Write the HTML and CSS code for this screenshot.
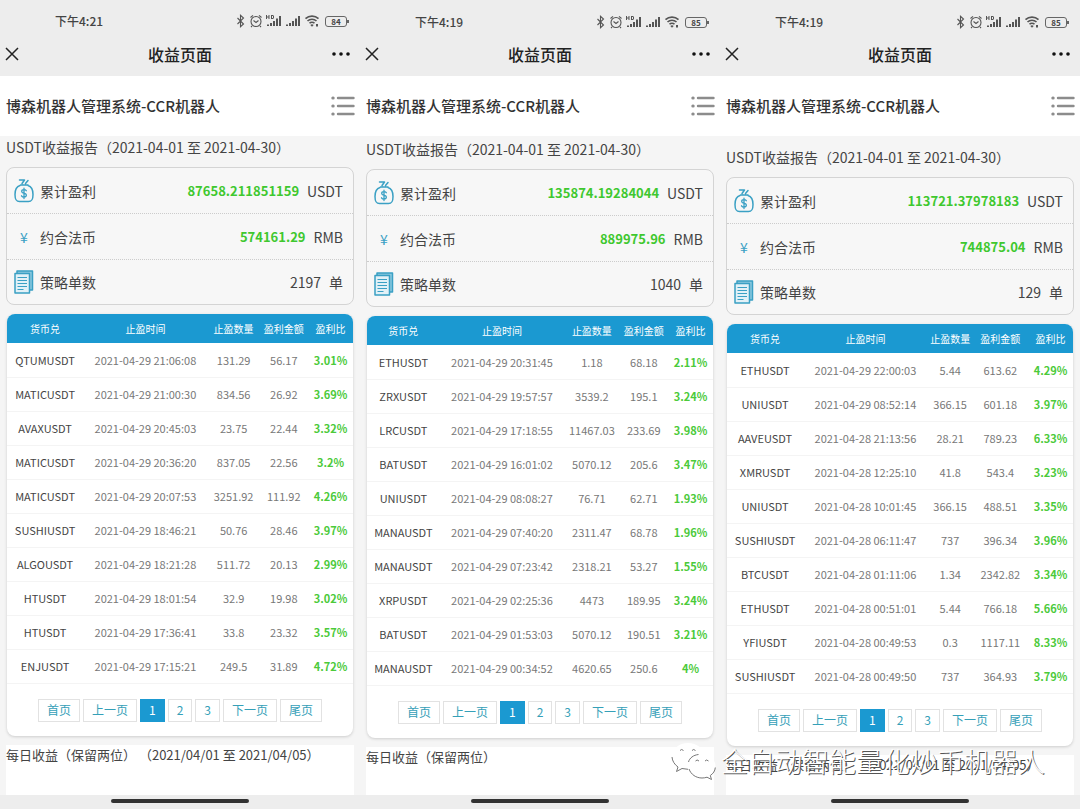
FILE: index.html
```html
<!DOCTYPE html>
<html lang="zh-CN">
<head>
<meta charset="utf-8">
<title>收益页面</title>
<link rel="stylesheet" href="styles.css">
</head>
<body>
<svg class="defs" aria-hidden="true">
  <symbol id="status" viewBox="0 0 84 14">
    <g fill="none" stroke="#555" stroke-width="1.1">
      <path d="M1.5 4l6 6-3 2.700V1.300l3 2.700-6 6"/>
      <circle cx="20" cy="7.500" r="5"/>
      <path d="M17.500 6.500l2.500 2 2.500-2M14.500 3.500l2.500-2.200M23 1.300l2.500 2.200M16 12l-1 1M24 12l1 1"/>
      <path d="M69.500 4.700a9.500 9.500 0 0 1 13 0M71.500 7a6.500 6.500 0 0 1 9 0M73.500 9.300a3.500 3.500 0 0 1 5 0" stroke-width="1.600"/>
    </g>
    <g fill="#555">
      <path d="M31 10.500h2V12h-2zM34 9h2v3h-2zM37 7h2v5h-2zM40 4.500h2V12h-2zM43 2h2v10h-2zM50 10.500h2V12h-2zM53 9h2v3h-2zM56 7h2v5h-2zM59 4.500h2V12h-2zM62 2h2v10h-2z"/>
      <path d="M74.300 11l1.700 1.700 1.700-1.700a2.400 2.400 0 0 0-3.400 0zM80 10h2v2.500h-2z"/>
      <path d="M30 1h1v1.500h1.500V1h1v4h-1V3.500H31V5h-1zM35 1h2l1 1v2l-1 1h-2zM36 2v2h1V2z"/>
    </g>
  </symbol>
  <symbol id="close" viewBox="0 0 14 14"><path d="M1 1l12 12M13 1L1 13" fill="none" stroke="#222" stroke-width="1.500"/></symbol>
  <symbol id="more" viewBox="0 0 18 4"><g fill="#111"><circle cx="2" cy="2" r="1.800"/><circle cx="9" cy="2" r="1.800"/><circle cx="16" cy="2" r="1.800"/></g></symbol>
  <symbol id="menu" viewBox="0 0 24 20"><g stroke="#8c8c8c" stroke-width="2.400" stroke-linecap="round"><path d="M7 2h15.500M7 10h15.500M7 18h15.500"/><path d="M1.800 2h.4M1.800 10h.4M1.800 18h.4" stroke-width="3"/></g></symbol>
  <symbol id="bag" viewBox="0 0 20 24">
    <g fill="none" stroke="#3aa0c4" stroke-width="1.500" stroke-linecap="round" stroke-linejoin="round">
      <path d="M5.500 1h5L8 4.500M14 1.500L11.500 4.500M6.500 6h7.500M6 6.500C2.500 7.500 1 11 1 15.500c0 5 1 7 4.500 7h9c3.500 0 4.500-2 4.500-7 0-4.500-1.500-8-5-9"/>
      <path d="M12.300 11.700c-.6-.8-1.300-1-2.300-1-1.300 0-2.300.6-2.300 1.700 0 2.500 4.700 1.200 4.700 3.700 0 1.200-1 1.900-2.400 1.900-1.100 0-2-.4-2.500-1.200M10 9.200v10.300" stroke-width="1.300"/>
    </g>
  </symbol>
  <symbol id="docs" viewBox="0 0 20 24">
    <g fill="none" stroke="#3aa0c4" stroke-width="1.500" stroke-linejoin="round">
      <path d="M3 3.500V1h15.500v19H16" fill="#8cc9df"/><path d="M1 3.500h14.500V23H1z" fill="#e2f1f7"/>
      <path d="M3.500 7.500H13M3.500 10.500H13M3.500 13.500H13M3.500 16.500H13M3.500 19.500h6" stroke-width="1.200"/>
    </g>
  </symbol>
</svg>

<main class="screens">
  <section class="phone phone-a">
    <header class="topbar">
      <div class="status"><span class="time">下午4:21</span><svg class="status-icons"><use href="#status"/></svg><span class="battery">84</span></div>
      <div class="nav"><button class="icon-btn" aria-label="关闭"><svg class="close"><use href="#close"/></svg></button><h1>收益页面</h1><button class="icon-btn" aria-label="更多"><svg class="more"><use href="#more"/></svg></button></div>
    </header>
    <div class="brand"><h2>博森机器人管理系统-CCR机器人</h2><button class="icon-btn" aria-label="菜单"><svg class="menu"><use href="#menu"/></svg></button></div>
    <div class="content">
      <h3 class="report">USDT收益报告（2021-04-01 至 2021-04-30）</h3>
      <div class="summary">
        <div class="line"><svg class="ico"><use href="#bag"/></svg><span>累计盈利</span><b class="amount">87658.211851159</b><span>USDT</span></div>
        <div class="line"><span class="ico yen">¥</span><span>约合法币</span><b class="amount">574161.29</b><span>RMB</span></div>
        <div class="line"><svg class="ico"><use href="#docs"/></svg><span>策略单数</span><span class="count">2197</span><span>单</span></div>
      </div>
      <div class="orders">
        <table>
          <colgroup><col class="c-pair"><col class="c-time"><col class="c-qty"><col class="c-sum"><col class="c-rate"></colgroup>
          <thead><tr><th>货币兑</th><th>止盈时间</th><th>止盈数量</th><th>盈利金额</th><th>盈利比</th></tr></thead>
          <tbody>
            <tr><td>QTUMUSDT</td><td>2021-04-29 21:06:08</td><td>131.29</td><td>56.17</td><td>3.01%</td></tr>
            <tr><td>MATICUSDT</td><td>2021-04-29 21:00:30</td><td>834.56</td><td>26.92</td><td>3.69%</td></tr>
            <tr><td>AVAXUSDT</td><td>2021-04-29 20:45:03</td><td>23.75</td><td>22.44</td><td>3.32%</td></tr>
            <tr><td>MATICUSDT</td><td>2021-04-29 20:36:20</td><td>837.05</td><td>22.56</td><td>3.2%</td></tr>
            <tr><td>MATICUSDT</td><td>2021-04-29 20:07:53</td><td>3251.92</td><td>111.92</td><td>4.26%</td></tr>
            <tr><td>SUSHIUSDT</td><td>2021-04-29 18:46:21</td><td>50.76</td><td>28.46</td><td>3.97%</td></tr>
            <tr><td>ALGOUSDT</td><td>2021-04-29 18:21:28</td><td>511.72</td><td>20.13</td><td>2.99%</td></tr>
            <tr><td>HTUSDT</td><td>2021-04-29 18:01:54</td><td>32.9</td><td>19.98</td><td>3.02%</td></tr>
            <tr><td>HTUSDT</td><td>2021-04-29 17:36:41</td><td>33.8</td><td>23.32</td><td>3.57%</td></tr>
            <tr><td>ENJUSDT</td><td>2021-04-29 17:15:21</td><td>249.5</td><td>31.89</td><td>4.72%</td></tr>
          </tbody>
        </table>
        <nav class="pager"><button>首页</button><button>上一页</button><button class="current">1</button><button>2</button><button>3</button><button>下一页</button><button>尾页</button></nav>
      </div>
      <div class="daily">每日收益（保留两位） （2021/04/01 至 2021/04/05）</div>
    </div>
    <footer class="homebar"><span class="pill"></span></footer>
  </section>

  <section class="phone phone-b">
    <header class="topbar">
      <div class="status"><span class="time">下午4:19</span><svg class="status-icons"><use href="#status"/></svg><span class="battery">85</span></div>
      <div class="nav"><button class="icon-btn" aria-label="关闭"><svg class="close"><use href="#close"/></svg></button><h1>收益页面</h1><button class="icon-btn" aria-label="更多"><svg class="more"><use href="#more"/></svg></button></div>
    </header>
    <div class="brand"><h2>博森机器人管理系统-CCR机器人</h2><button class="icon-btn" aria-label="菜单"><svg class="menu"><use href="#menu"/></svg></button></div>
    <div class="content">
      <h3 class="report">USDT收益报告（2021-04-01 至 2021-04-30）</h3>
      <div class="summary">
        <div class="line"><svg class="ico"><use href="#bag"/></svg><span>累计盈利</span><b class="amount">135874.19284044</b><span>USDT</span></div>
        <div class="line"><span class="ico yen">¥</span><span>约合法币</span><b class="amount">889975.96</b><span>RMB</span></div>
        <div class="line"><svg class="ico"><use href="#docs"/></svg><span>策略单数</span><span class="count">1040</span><span>单</span></div>
      </div>
      <div class="orders">
        <table>
          <colgroup><col class="c-pair"><col class="c-time"><col class="c-qty"><col class="c-sum"><col class="c-rate"></colgroup>
          <thead><tr><th>货币兑</th><th>止盈时间</th><th>止盈数量</th><th>盈利金额</th><th>盈利比</th></tr></thead>
          <tbody>
            <tr><td>ETHUSDT</td><td>2021-04-29 20:31:45</td><td>1.18</td><td>68.18</td><td>2.11%</td></tr>
            <tr><td>ZRXUSDT</td><td>2021-04-29 19:57:57</td><td>3539.2</td><td>195.1</td><td>3.24%</td></tr>
            <tr><td>LRCUSDT</td><td>2021-04-29 17:18:55</td><td>11467.03</td><td>233.69</td><td>3.98%</td></tr>
            <tr><td>BATUSDT</td><td>2021-04-29 16:01:02</td><td>5070.12</td><td>205.6</td><td>3.47%</td></tr>
            <tr><td>UNIUSDT</td><td>2021-04-29 08:08:27</td><td>76.71</td><td>62.71</td><td>1.93%</td></tr>
            <tr><td>MANAUSDT</td><td>2021-04-29 07:40:20</td><td>2311.47</td><td>68.78</td><td>1.96%</td></tr>
            <tr><td>MANAUSDT</td><td>2021-04-29 07:23:42</td><td>2318.21</td><td>53.27</td><td>1.55%</td></tr>
            <tr><td>XRPUSDT</td><td>2021-04-29 02:25:36</td><td>4473</td><td>189.95</td><td>3.24%</td></tr>
            <tr><td>BATUSDT</td><td>2021-04-29 01:53:03</td><td>5070.12</td><td>190.51</td><td>3.21%</td></tr>
            <tr><td>MANAUSDT</td><td>2021-04-29 00:34:52</td><td>4620.65</td><td>250.6</td><td>4%</td></tr>
          </tbody>
        </table>
        <nav class="pager"><button>首页</button><button>上一页</button><button class="current">1</button><button>2</button><button>3</button><button>下一页</button><button>尾页</button></nav>
      </div>
      <div class="daily">每日收益（保留两位）</div>
    </div>
    <footer class="homebar"><span class="pill"></span></footer>
  </section>

  <section class="phone phone-c">
    <header class="topbar">
      <div class="status"><span class="time">下午4:19</span><svg class="status-icons"><use href="#status"/></svg><span class="battery">85</span></div>
      <div class="nav"><button class="icon-btn" aria-label="关闭"><svg class="close"><use href="#close"/></svg></button><h1>收益页面</h1><button class="icon-btn" aria-label="更多"><svg class="more"><use href="#more"/></svg></button></div>
    </header>
    <div class="brand"><h2>博森机器人管理系统-CCR机器人</h2><button class="icon-btn" aria-label="菜单"><svg class="menu"><use href="#menu"/></svg></button></div>
    <div class="content">
      <h3 class="report">USDT收益报告（2021-04-01 至 2021-04-30）</h3>
      <div class="summary">
        <div class="line"><svg class="ico"><use href="#bag"/></svg><span>累计盈利</span><b class="amount">113721.37978183</b><span>USDT</span></div>
        <div class="line"><span class="ico yen">¥</span><span>约合法币</span><b class="amount">744875.04</b><span>RMB</span></div>
        <div class="line"><svg class="ico"><use href="#docs"/></svg><span>策略单数</span><span class="count">129</span><span>单</span></div>
      </div>
      <div class="orders">
        <table>
          <colgroup><col class="c-pair"><col class="c-time"><col class="c-qty"><col class="c-sum"><col class="c-rate"></colgroup>
          <thead><tr><th>货币兑</th><th>止盈时间</th><th>止盈数量</th><th>盈利金额</th><th>盈利比</th></tr></thead>
          <tbody>
            <tr><td>ETHUSDT</td><td>2021-04-29 22:00:03</td><td>5.44</td><td>613.62</td><td>4.29%</td></tr>
            <tr><td>UNIUSDT</td><td>2021-04-29 08:52:14</td><td>366.15</td><td>601.18</td><td>3.97%</td></tr>
            <tr><td>AAVEUSDT</td><td>2021-04-28 21:13:56</td><td>28.21</td><td>789.23</td><td>6.33%</td></tr>
            <tr><td>XMRUSDT</td><td>2021-04-28 12:25:10</td><td>41.8</td><td>543.4</td><td>3.23%</td></tr>
            <tr><td>UNIUSDT</td><td>2021-04-28 10:01:45</td><td>366.15</td><td>488.51</td><td>3.35%</td></tr>
            <tr><td>SUSHIUSDT</td><td>2021-04-28 06:11:47</td><td>737</td><td>396.34</td><td>3.96%</td></tr>
            <tr><td>BTCUSDT</td><td>2021-04-28 01:11:06</td><td>1.34</td><td>2342.82</td><td>3.34%</td></tr>
            <tr><td>ETHUSDT</td><td>2021-04-28 00:51:01</td><td>5.44</td><td>766.18</td><td>5.66%</td></tr>
            <tr><td>YFIUSDT</td><td>2021-04-28 00:49:53</td><td>0.3</td><td>1117.11</td><td>8.33%</td></tr>
            <tr><td>SUSHIUSDT</td><td>2021-04-28 00:49:50</td><td>737</td><td>364.93</td><td>3.79%</td></tr>
          </tbody>
        </table>
        <nav class="pager"><button>首页</button><button>上一页</button><button class="current">1</button><button>2</button><button>3</button><button>下一页</button><button>尾页</button></nav>
      </div>
      <div class="daily">每日收益（保留两位） （2021/04/01 至 2021/04/05）</div>
    </div>
    <footer class="homebar"><span class="pill"></span></footer>
  </section>

  <div class="watermark">
    <svg class="wechat" viewBox="0 0 46 38" aria-hidden="true">
      <path class="bubble" d="M17 1C8 1 1 7 1 14.500c0 4.500 2.500 8 6 10.500l-1.500 4.500 5.500-3c2 .6 4 .8 6 .8 9 0 16-6 16-13.300S26 1 17 1z"/>
      <path class="bubble" d="M31 12.500c-8 0-14 5-14 11.500s6 12 14 12c2 0 3.500-.3 5-.8l4.500 2.300-1.200-4c3.500-2.200 5.200-5.500 5.200-9.500 0-6.500-6-11.500-13.500-11.500z"/>
      <path class="edge" d="M1 15c.3 4 2.500 7.500 6 10l-1.500 4.500 5.500-3 6 .8M17.500 20c1-4 5-7 10-7.500M18 27c2 5.500 7 9 13 9 2 0 3.500-.3 5-.8l4.500 2.300-1.200-4c3-2 4.700-4.500 5-8M9 8.500q1.500-2 3.500 0M21 8.500q1.500-2 3.500 0M24.500 19q1.500-2 3.500 0M34 19q1.500-2 3.500 0"/>
    </svg>
    <span>全自动智能量化炒币机器人</span>
  </div>
</main>
</body>
</html>
```
FILE: styles.css
```css
* { box-sizing: border-box; }

body {
  margin: 0;
  font-family: "Noto Sans CJK SC", "Noto Sans", sans-serif;
  font-size: 14px;
  line-height: 20px;
  color: #444;
  background: #f5f5f5;
}

h1, h2, h3 { margin: 0; }
button { font: inherit; color: inherit; cursor: pointer; }
svg { display: block; }

.defs { position: absolute; width: 0; height: 0; }

.screens {
  position: relative;
  display: grid;
  grid-template-columns: repeat(3, 1fr);
  min-height: 100vh;
}

.phone { display: flex; flex-direction: column; min-width: 0; }

/* Top bars */
.topbar { background: #ededed; }

.status {
  display: flex;
  align-items: center;
  height: 32px;
  padding: 10px 12px 0 55px;
  font-size: 12px;
  font-weight: 500;
}
.phone-b .status, .phone-c .status { padding-top: 12px; }
.time { margin-right: auto; }
.status-icons { width: 84px; height: 14px; margin-right: 5px; }
.battery {
  position: relative;
  width: 22px;
  height: 11px;
  margin-right: 1px;
  border: 1px solid #666;
  border-radius: 3px;
  font-size: 8px;
  font-weight: 700;
  line-height: 9px;
  text-align: center;
}
.battery::after {
  content: "";
  position: absolute;
  top: 3px;
  right: -3px;
  width: 2px;
  height: 3px;
  background: #666;
}

.nav {
  display: grid;
  grid-template-columns: 1fr auto 1fr;
  align-items: center;
  height: 44px;
  padding: 0 5px;
}
.nav h1 { font-size: 16px; font-weight: 500; color: #222; }
.icon-btn { padding: 0; border: 0; background: none; }
.close { width: 14px; height: 14px; }
.more { width: 18px; height: 4px; margin: 0 5px 0 auto; }

.brand {
  display: flex;
  align-items: center;
  justify-content: space-between;
  height: 60px;
  padding: 0 5px 0 6px;
  background: #fff;
}
.brand h2 { font-size: 15px; font-weight: 500; color: #333; }
.menu { width: 24px; height: 20px; }

/* Report */
.content {
  display: flex;
  flex: 1;
  flex-direction: column;
  padding: 1px 6px 0;
  background: #f5f5f5;
}
.phone-b .content { padding-top: 3px; }
.phone-c .content { padding-top: 11px; }

.report { font-size: 14px; font-weight: 400; }

.summary {
  margin-top: 10px;
  border: 1px solid #d4d4d4;
  border-radius: 8px;
  background: #f7f7f7;
}
.line {
  display: flex;
  align-items: center;
  height: 45px;
  padding: 0 10px 0 7px;
}
.line + .line { height: 46px; border-top: 1px dotted #ccc; }
.line:last-child { height: 45px; }
.ico { width: 20px; height: 24px; margin-right: 6px; }
.yen { color: #3aa0c4; line-height: 24px; text-align: center; }
.amount { margin: 0 8px 0 auto; font-size: 13px; font-weight: 700; color: #3fc82f; }
.count { margin: 0 8px 0 auto; }

.orders {
  margin: 9px 1px 0;
  border-radius: 8px;
  background: #fff;
  box-shadow: 0 1px 3px #ccc;
  overflow: hidden;
}
table { width: 100%; border-collapse: collapse; table-layout: fixed; }
th {
  height: 29px;
  padding: 0;
  font-size: 10px;
  font-weight: 400;
  color: #fff;
  background: #1b99d1;
}
td {
  height: 34px;
  padding: 0;
  border-bottom: 1px solid #f4f4f4;
  font-size: 11px;
  line-height: 16px;
  color: #777;
  text-align: center;
  white-space: nowrap;
}
td:first-child { color: #444; }
td:last-child { font-weight: 700; color: #4bca3a; }

.c-pair { width: 22%; }
.c-time { width: 36%; }
.c-qty { width: 15%; }
.c-sum { width: 14%; }
.c-rate { width: 13%; }
.phone-b .c-pair { width: 21%; }
.phone-b .c-qty { width: 16%; }
.phone-c .c-qty { width: 13%; }
.phone-c .c-sum { width: 16%; }

.pager {
  display: flex;
  justify-content: center;
  gap: 3px;
  padding: 15px 0 14px;
}
.pager button {
  height: 23px;
  padding: 0 8px;
  border: 1px solid #e2e2e2;
  font-size: 12px;
  line-height: 20px;
  color: #35a0b8;
  background: #fff;
}
.pager .current { border-color: #1b99d1; color: #fff; background: #1b99d1; }

.daily {
  flex: 1;
  min-height: 40px;
  margin-top: 9px;
  font-size: 13px;
  background: #fff;
}

.homebar {
  display: flex;
  justify-content: center;
  height: 14px;
  padding-top: 4px;
  background: #ededed;
}
.pill { width: 138px; height: 4px; border-radius: 2px; background: #333; }

/* Embossed account name laid over the screens */
.watermark {
  position: absolute;
  right: 35px;
  bottom: 28px;
  display: flex;
  align-items: center;
  gap: 4px;
  font-size: 27px;
  font-weight: 300;
  line-height: 40px;
  color: #fff;
  text-shadow: 1px 1px 0 #555;
}
.wechat { width: 46px; height: 38px; }
.bubble { fill: #fff; }
.edge { fill: none; stroke: #777; stroke-width: 1; }
```
